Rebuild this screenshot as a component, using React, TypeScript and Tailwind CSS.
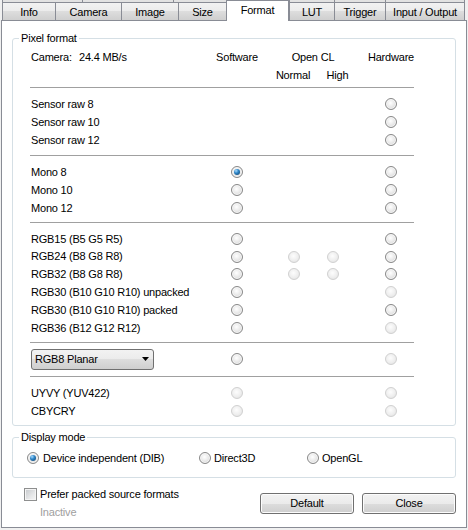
import React from "react";

type RS = "off" | "dis" | "checked" | null;

function Radio({ state }: { state: RS }) {
  if (state === null) return <div className="w-[12px] h-[12px] shrink-0" />;
  if (state === "dis")
    return (
      <div className="w-[12px] h-[12px] shrink-0 rounded-full border border-[#d0d0d0] bg-[radial-gradient(circle_at_45%_40%,#fdfdfd_0%,#eeeeee_55%,#dedede_100%)]" />
    );
  return (
    <div className="w-[12px] h-[12px] shrink-0 rounded-full border border-[#888888] bg-[radial-gradient(circle_at_45%_40%,#ffffff_0%,#e8e8e8_50%,#c8c8c8_100%)] shadow-[inset_0_0_0_1px_#f8f8f8] flex items-center justify-center">
      {state === "checked" && (
        <div className="w-[6px] h-[6px] rounded-full bg-[radial-gradient(circle_at_35%_30%,#a9dcff_0%,#2f86c8_40%,#0c3b63_100%)]" />
      )}
    </div>
  );
}

function Row({
  label,
  s,
  h = "h-[18px]",
}: {
  label: React.ReactNode;
  s: [RS, RS, RS, RS];
  h?: string;
}) {
  return (
    <div className={`flex items-center ${h}`}>
      <div className="w-[200px] shrink-0 flex items-center">{label}</div>
      <Radio state={s[0]} />
      <div className="w-[45px] shrink-0" />
      <Radio state={s[1]} />
      <div className="w-[27px] shrink-0" />
      <Radio state={s[2]} />
      <div className="w-[46px] shrink-0" />
      <Radio state={s[3]} />
    </div>
  );
}

function Sep({ mt, mb }: { mt: string; mb: string }) {
  return <div className={`w-[384px] h-px bg-[#a0a0a0] ml-[-1px] ${mt} ${mb}`} />;
}

const tabBg =
  "bg-[linear-gradient(#f2f2f2_0%,#ebebeb_50%,#dddddd_50%,#cfcfcf_100%)]";

function Tab({ label, w }: { label: string; w: string }) {
  return (
    <div
      className={`${w} h-[18px] shrink-0 border-l border-t border-[#898c95] ${tabBg} text-center pt-[2px] leading-[14px]`}
    >
      {label}
    </div>
  );
}

export default function App() {
  return (
    <div className="w-[468px] h-[530px] bg-[#f0f0f0] overflow-hidden text-[11px] tracking-[-0.2px] text-black font-['Liberation_Sans',Arial,sans-serif]">
      {/* back tab row remnants */}
      <div className="flex h-[2px] ml-[2px]">
        <div className="w-[80px] border-l border-[#898c95] bg-[#e2e2e2]" />
        <div className="w-[91px] border-l border-[#898c95] bg-[#e2e2e2]" />
        <div className="w-[116px] border-l border-[#898c95] bg-[#e2e2e2]" />
        <div className="w-[45px] border-l border-[#898c95] bg-[#e2e2e2]" />
        <div className="w-[51px] border-l border-[#898c95] bg-[#e2e2e2]" />
        <div className="w-[80px] border-l border-r border-[#898c95] bg-[#e2e2e2]" />
      </div>
      {/* front tab row */}
      <div className="flex h-[18px] ml-[2px] items-start">
        <Tab label="Info" w="w-[53px]" />
        <Tab label="Camera" w="w-[66px]" />
        <Tab label="Image" w="w-[57px]" />
        <Tab label="Size" w="w-[48px]" />
        <div className="relative z-10 w-[63px] h-[21px] -mt-[2px] shrink-0 border-l border-t border-r border-[#898c95] bg-white text-center pt-[2px] leading-[14px]">
          Format
        </div>
        <Tab label="LUT" w="w-[45px]" />
        <Tab label="Trigger" w="w-[51px]" />
        <div
          className={`w-[80px] h-[18px] shrink-0 border-l border-t border-r border-[#898c95] ${tabBg} text-center pt-[2px] leading-[14px]`}
        >
          Input / Output
        </div>
      </div>

      {/* panel */}
      <div className="ml-[1px] w-[466px] h-[508px] border border-[#898c95] bg-white">
        {/* Pixel format group */}
        <div className="relative ml-[10px] mt-[17px] w-[444px] border border-[#d5dfe5] rounded-[3px] pl-[18px] pt-[9px] pb-[5px]">
          <div className="absolute left-[6px] top-[-8px] px-[2px] bg-white leading-[14px]">
            Pixel format
          </div>
          <div className="flex h-[18px] items-center">
            <div className="w-[176px] shrink-0 flex">
              <div className="w-[48px]">Camera:</div>
              <div>24.4 MB/s</div>
            </div>
            <div className="w-[60px] shrink-0 text-center">Software</div>
            <div className="w-[16px] shrink-0" />
            <div className="w-[60px] shrink-0 text-center">Open CL</div>
            <div className="w-[18px] shrink-0" />
            <div className="w-[60px] shrink-0 text-center">Hardware</div>
          </div>
          <div className="flex h-[18px] items-center">
            <div className="w-[232px] shrink-0" />
            <div className="w-[60px] shrink-0 text-center">Normal</div>
            <div className="w-[29px] shrink-0 text-center">High</div>
          </div>
          <Sep mt="mt-[3px]" mb="mb-[7px]" />
          <Row label="Sensor raw 8" s={[null, null, null, "off"]} />
          <Row label="Sensor raw 10" s={[null, null, null, "off"]} />
          <Row label="Sensor raw 12" s={[null, null, null, "off"]} />
          <Sep mt="mt-[6px]" mb="mb-[7px]" />
          <Row label="Mono 8" s={["checked", null, null, "off"]} />
          <Row label="Mono 10" s={["off", null, null, "off"]} />
          <Row label="Mono 12" s={["off", null, null, "off"]} />
          <Sep mt="mt-[5px]" mb="mb-[7px]" />
          <Row h="h-[17.8px]" label="RGB15 (B5 G5 R5)" s={["off", null, null, "off"]} />
          <Row h="h-[17.8px]" label="RGB24 (B8 G8 R8)" s={["off", "dis", "dis", "off"]} />
          <Row h="h-[17.8px]" label="RGB32 (B8 G8 R8)" s={["off", "dis", "dis", "off"]} />
          <Row h="h-[17.8px]" label="RGB30 (B10 G10 R10) unpacked" s={["off", null, null, "dis"]} />
          <Row h="h-[17.8px]" label="RGB30 (B10 G10 R10) packed" s={["off", null, null, "off"]} />
          <Row h="h-[17.8px]" label="RGB36 (B12 G12 R12)" s={["off", null, null, "dis"]} />
          <Sep mt="mt-[5px]" mb="mb-[6px]" />
          <Row
            h="h-[21px]"
            label={
              <div className="w-[123px] h-[21px] border border-[#707070] rounded-[3px] bg-[linear-gradient(#f2f2f2_0%,#ebebeb_50%,#dddddd_50%,#cfcfcf_100%)] flex items-center justify-between pl-[3px] pr-[4px]">
                <span>RGB8 Planar</span>
                <svg width="7" height="4" viewBox="0 0 7 4">
                  <polygon points="0,0 7,0 3.5,4" fill="#000" />
                </svg>
              </div>
            }
            s={["off", null, null, "dis"]}
          />
          <Sep mt="mt-[6px]" mb="mb-[7px]" />
          <Row label="UYVY (YUV422)" s={["dis", null, null, "dis"]} />
          <Row label="CBYCRY" s={["dis", null, null, "dis"]} />
        </div>

        {/* Display mode group */}
        <div className="relative ml-[10px] mt-[11px] w-[444px] border border-[#d5dfe5] rounded-[3px] pl-[14px] pt-[11px] pb-[10px]">
          <div className="absolute left-[6px] top-[-8px] px-[2px] bg-white leading-[14px]">
            Display mode
          </div>
          <div className="flex h-[18px] items-center">
            <div className="w-[172px] shrink-0 flex items-center gap-[4px]">
              <Radio state="checked" />
              <span>Device independent (DIB)</span>
            </div>
            <div className="w-[108px] shrink-0 flex items-center gap-[3px]">
              <Radio state="off" />
              <span>Direct3D</span>
            </div>
            <div className="flex items-center gap-[3px]">
              <Radio state="off" />
              <span>OpenGL</span>
            </div>
          </div>
        </div>

        {/* bottom */}
        <div className="flex justify-between pl-[22px] pr-[10px] mt-[10px]">
          <div>
            <div className="flex items-center gap-[3px] h-[13px] leading-[13px]">
              <div className="w-[13px] h-[13px] border border-[#8e8f8f] bg-[linear-gradient(135deg,#c4c7cb_0%,#e6e7e8_60%,#f6f6f6_100%)] shadow-[inset_0_0_0_1px_#f4f4f4]" />
              <span>Prefer packed source formats</span>
            </div>
            <div className="pl-[16px] mt-[5px] leading-[13px] text-[#a0a0a0]">Inactive</div>
          </div>
          <div className="flex gap-[8px] mt-[5px]">
            <div className="w-[94px] h-[21px] border border-[#707070] rounded-[3px] bg-[linear-gradient(#f2f2f2_0%,#ebebeb_50%,#dddddd_50%,#cfcfcf_100%)] shadow-[inset_0_0_0_1px_#fcfcfc] flex items-center justify-center">
              Default
            </div>
            <div className="w-[94px] h-[21px] border border-[#707070] rounded-[3px] bg-[linear-gradient(#f2f2f2_0%,#ebebeb_50%,#dddddd_50%,#cfcfcf_100%)] shadow-[inset_0_0_0_1px_#fcfcfc] flex items-center justify-center">
              Close
            </div>
          </div>
        </div>
      </div>
    </div>
  );
}
